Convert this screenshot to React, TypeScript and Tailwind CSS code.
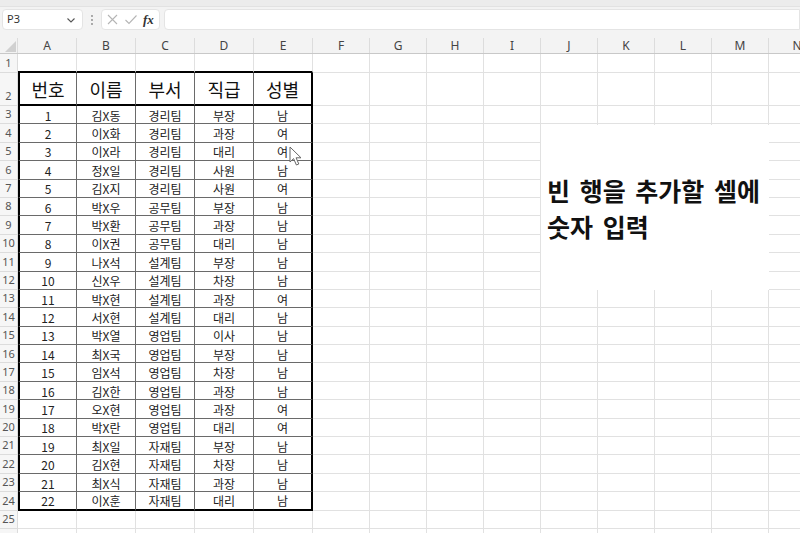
import React from 'react';

const cols = ['A', 'B', 'C', 'D', 'E', 'F', 'G', 'H', 'I', 'J', 'K', 'L', 'M', 'N'];

const data: [string, string, string, string, string][] = [
  ['1', '김X동', '경리팀', '부장', '남'],
  ['2', '이X화', '경리팀', '과장', '여'],
  ['3', '이X라', '경리팀', '대리', '여'],
  ['4', '정X일', '경리팀', '사원', '남'],
  ['5', '김X지', '경리팀', '사원', '여'],
  ['6', '박X우', '공무팀', '부장', '남'],
  ['7', '박X환', '공무팀', '과장', '남'],
  ['8', '이X권', '공무팀', '대리', '남'],
  ['9', '나X석', '설계팀', '부장', '남'],
  ['10', '신X우', '설계팀', '차장', '남'],
  ['11', '박X현', '설계팀', '과장', '여'],
  ['12', '서X현', '설계팀', '대리', '남'],
  ['13', '박X열', '영업팀', '이사', '남'],
  ['14', '최X국', '영업팀', '부장', '남'],
  ['15', '임X석', '영업팀', '차장', '남'],
  ['16', '김X한', '영업팀', '과장', '남'],
  ['17', '오X현', '영업팀', '과장', '여'],
  ['18', '박X란', '영업팀', '대리', '여'],
  ['19', '최X일', '자재팀', '부장', '남'],
  ['20', '김X현', '자재팀', '차장', '남'],
  ['21', '최X식', '자재팀', '과장', '남'],
  ['22', '이X훈', '자재팀', '대리', '남'],
];

const header = ['번호', '이름', '부서', '직급', '성별'];

function rowHeight(r: number) {
  if (r === 1) return 'h-[19px]';
  if (r === 2) return 'h-[33px]';
  return 'h-[18.4px]';
}

function cellClass(r: number, i: number) {
  const width = i < 5 ? 'w-[59px]' : 'w-[57px]';
  const base = `${width} shrink-0 box-border flex items-center justify-center`;
  if (i < 5 && r >= 2 && r <= 24) {
    const right = i === 4 ? 'border-r-2 border-r-black' : 'border-r border-r-[#6a6a6a]';
    const bottom = r === 2 || r === 24 ? 'border-b-2 border-b-black' : 'border-b border-b-[#6a6a6a]';
    const left = i === 0 ? 'border-l-2 border-l-black' : '';
    return `${base} ${right} ${bottom} ${left}`;
  }
  if (i < 5 && r === 1) {
    return `${base} border-r border-r-[#e1e1e1] border-b-2 border-b-black`;
  }
  return `${base} border-r border-b border-[#e1e1e1]`;
}

function cellText(r: number, i: number) {
  if (i >= 5) return null;
  if (r === 2) return header[i];
  if (r >= 3 && r <= 24) return data[r - 3][i];
  return null;
}

export default function App() {
  const rows = Array.from({ length: 26 }, (_, k) => k + 1);

  return (
    <div className="relative w-[800px] h-[533px] overflow-hidden bg-white font-['Noto_Sans_CJK_KR',sans-serif] text-[#111]">
      {/* formula bar */}
      <div className="h-[38px] bg-[#f3f3f3]">
        <div className="h-[7px] bg-[#ececec] border-b border-[#e2e2e2]" />
        <div className="flex items-center h-[21px] mt-[2px]">
          <div className="ml-[2px] w-[81px] h-[21px] bg-white rounded-[4px] border border-[#e4e4e4] flex items-center justify-between px-[4px]">
            <span className="text-[11px] text-[#333] font-['Noto_Sans',sans-serif]">P3</span>
            <svg width="10" height="10" viewBox="0 0 10 10" className="mr-[2px]">
              <path d="M1.5 3.5 L5 7 L8.5 3.5" fill="none" stroke="#555" strokeWidth="1.1" />
            </svg>
          </div>
          <div className="w-[18px] flex justify-center">
            <svg width="4" height="12" viewBox="0 0 4 12">
              <circle cx="2" cy="2" r="0.9" fill="#888" />
              <circle cx="2" cy="6" r="0.9" fill="#888" />
              <circle cx="2" cy="10" r="0.9" fill="#888" />
            </svg>
          </div>
          <div className="w-[59px] h-[21px] bg-white rounded-[4px] border border-[#e4e4e4] flex items-center gap-[5px] pl-[4px]">
            <svg width="13" height="13" viewBox="0 0 13 13">
              <path d="M2 2 L11 11 M11 2 L2 11" stroke="#b5b5b5" strokeWidth="1.1" />
            </svg>
            <svg width="14" height="13" viewBox="0 0 14 13">
              <path d="M1.5 7 L5 10.5 L12.5 2.5" fill="none" stroke="#b5b5b5" strokeWidth="1.1" />
            </svg>
            <span className="text-[13px] italic font-bold text-[#333] font-['Liberation_Serif',serif] leading-none">fx</span>
          </div>
          <div className="ml-[4px] flex-1 h-[21px] bg-white rounded-l-[4px] border border-[#e4e4e4]" />
        </div>
      </div>

      {/* column headers */}
      <div className="flex h-[16px] bg-[#f3f3f3] border-b border-[#c8c8c8]">
        <div className="w-[18px] shrink-0 border-r border-[#dcdcdc] flex items-end justify-end p-[1px]">
          <svg width="11" height="11" viewBox="0 0 11 11">
            <path d="M11 0 L11 11 L0 11 Z" fill="#d0d0d0" />
          </svg>
        </div>
        {cols.map((c, i) => (
          <div
            key={c}
            className={`${i < 5 ? 'w-[59px]' : 'w-[57px]'} shrink-0 box-border border-r border-[#dcdcdc] flex items-center justify-center text-[12px] text-[#444] font-['Noto_Sans',sans-serif]`}
          >
            {c}
          </div>
        ))}
      </div>

      {/* sheet rows */}
      {rows.map((r) => (
        <div key={r} className={`flex ${rowHeight(r)}`}>
          <div
            className={`w-[18px] shrink-0 box-border bg-[#f6f6f6] border-r border-b border-[#dcdcdc] flex justify-center text-[11px] text-[#555] font-['Noto_Sans',sans-serif] ${r === 2 ? 'items-end pb-[1px]' : 'items-center'}`}
          >
            {r <= 25 ? r : null}
          </div>
          {cols.map((c, i) => (
            <div
              key={c}
              className={`${cellClass(r, i)} ${r === 2 ? 'text-[18px] pt-[1px]' : 'text-[12px] text-[#222] pt-[2px]'}`}
            >
              {cellText(r, i)}
            </div>
          ))}
        </div>
      ))}

      {/* text box over J-M */}
      <div className="absolute left-[541px] top-[125px] w-[228px] h-[165px] bg-white flex items-center pl-[6px]">
        <p className="text-[25px] font-bold leading-[36px] text-[#111] [word-spacing:4px]">
          빈 행을 추가할 셀에
          <br />
          숫자 입력
        </p>
      </div>

      {/* mouse pointer */}
      <svg className="absolute left-[289px] top-[146px]" width="14" height="21" viewBox="0 0 14 21">
        <path d="M1 1 L1 16 L4.6 12.6 L7.4 19 L9.8 18 L7.1 11.8 L12 11.8 Z" fill="#fff" stroke="#666" strokeWidth="1" strokeLinejoin="round" />
      </svg>
    </div>
  );
}
